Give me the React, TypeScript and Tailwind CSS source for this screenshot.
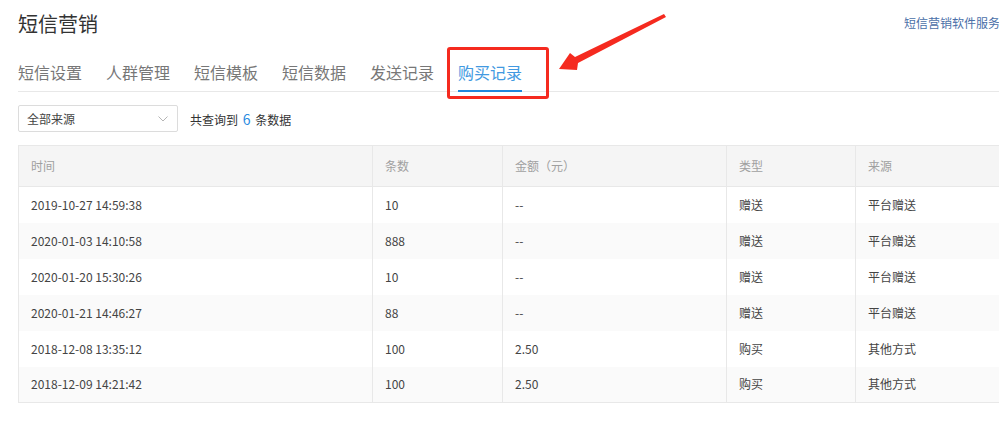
const tabs = ["短信设置", "人群管理", "短信模板", "短信数据", "发送记录", "购买记录"];

const rows = [
  { time: "2019-10-27 14:59:38", count: "10", amount: "--", type: "赠送", source: "平台赠送" },
  { time: "2020-01-03 14:10:58", count: "888", amount: "--", type: "赠送", source: "平台赠送" },
  { time: "2020-01-20 15:30:26", count: "10", amount: "--", type: "赠送", source: "平台赠送" },
  { time: "2020-01-21 14:46:27", count: "88", amount: "--", type: "赠送", source: "平台赠送" },
  { time: "2018-12-08 13:35:12", count: "100", amount: "2.50", type: "购买", source: "其他方式" },
  { time: "2018-12-09 14:21:42", count: "100", amount: "2.50", type: "购买", source: "其他方式" },
];

export default function App() {
  return (
    <div
      className="relative h-[423px] w-[999px] overflow-hidden bg-white"
      style={{ fontFamily: '"Noto Sans CJK SC", "Noto Sans", sans-serif' }}
    >
      <div className="w-[1100px] pl-[18px]">
        {/* Header */}
        <div className="flex h-[48px] w-[982px] items-center justify-between">
          <h1 className="text-[20px] leading-none text-[#333]">短信营销</h1>
          <a className="mt-[-2px] text-[12px] leading-none text-[#4a6fa8]">短信营销软件服务</a>
        </div>

        {/* Tabs */}
        <div className="flex h-[44px] w-[982px] gap-[24px] border-b border-[#e8e8e8]">
          {tabs.map((t, i) => {
            const active = i === tabs.length - 1;
            return (
              <div key={t} className="relative flex items-center pt-[4px]">
                <span
                  className={`text-[16px] leading-none ${active ? "text-[#4299e1]" : "text-[#777]"}`}
                >
                  {t}
                </span>
                {active && (
                  <div className="absolute bottom-[-1px] left-0 right-0 h-[2px] bg-[#1f88dd]" />
                )}
              </div>
            );
          })}
        </div>

        {/* Filter row */}
        <div className="mt-[13px] flex items-center">
          <div className="flex h-[27px] w-[160px] items-center justify-between rounded-[2px] border border-[#dcdcdc] pl-[8px] pr-[9px]">
            <span className="text-[12px] leading-none text-[#444]">全部来源</span>
            <svg width="10" height="6" viewBox="0 0 10 6" fill="none">
              <path d="M0.5 0.5 L5 5 L9.5 0.5" stroke="#b5b5b5" strokeWidth="1" />
            </svg>
          </div>
          <div className="ml-[12px] text-[12px] leading-none text-[#333]">
            共查询到 <span className="mx-[2px] text-[14px] text-[#2a8be0]">6</span> 条数据
          </div>
        </div>

        {/* Table */}
        <table className="mt-[13px] w-[1100px] table-fixed border-collapse border border-[#e8e8e8] text-[12px]">
          <colgroup>
            <col className="w-[354px]" />
            <col className="w-[130px]" />
            <col className="w-[224px]" />
            <col className="w-[129px]" />
            <col />
          </colgroup>
          <thead>
            <tr className="h-[41px] bg-[#f5f5f5]">
              {["时间", "条数", "金额（元）", "类型", "来源"].map((h) => (
                <th
                  key={h}
                  className="border-r border-b border-[#e8e8e8] px-[12px] text-left font-normal text-[#a0a0a0]"
                >
                  {h}
                </th>
              ))}
            </tr>
          </thead>
          <tbody>
            {rows.map((r, i) => (
              <tr key={r.time} className={`h-[36px] ${i % 2 === 1 ? "bg-[#fafafa]" : "bg-white"}`}>
                {[r.time, r.count, r.amount, r.type, r.source].map((c, j) => (
                  <td key={j} className="border-r border-[#e8e8e8] px-[12px] text-[#444]">
                    {c}
                  </td>
                ))}
              </tr>
            ))}
          </tbody>
        </table>
      </div>

      {/* Annotation: red box + arrow */}
      <div className="absolute left-[447px] top-[47px] h-[52px] w-[102px] rounded-[3px] border-[3px] border-[#f52a1f]" />
      <svg className="absolute left-0 top-0" width="999" height="423" viewBox="0 0 999 423">
        <polygon
          points="559,69 570,53 575,57 664,14 666,17 578,63 577,70"
          fill="#f52a1f"
        />
      </svg>
    </div>
  );
}
